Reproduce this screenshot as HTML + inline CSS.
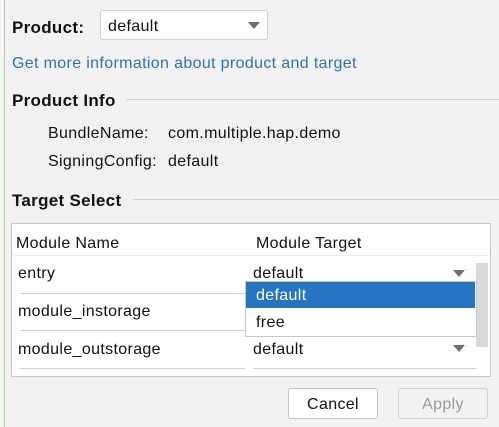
<html><head><style>
body{margin:0;width:499px;height:427px;background:#f2f2f2;position:relative;overflow:hidden;font-family:"Liberation Sans",sans-serif;font-size:16px;letter-spacing:0.35px;color:#111}
.a{position:absolute;white-space:nowrap}
.t{margin-top:2px}
.b{font-weight:bold;font-size:17px;letter-spacing:0.3px}
.line{position:absolute;height:1px;background:#d0d0d0}
.tri{position:absolute;width:0;height:0;border-left:6px solid transparent;border-right:6px solid transparent;border-top:7px solid #6e6e6e}
</style></head><body>
<div class="a" style="left:0;top:0;width:4px;height:427px;background:#eef8ea"></div>
<div class="a" style="left:0;top:0;width:4px;height:58px;background:#f6f6f6"></div>
<div class="a" style="left:4px;top:0;width:1px;height:427px;background:#bdbdbd"></div>
<div class="a b t" style="left:12px;top:16px">Product:</div>
<div class="a" style="left:100px;top:10px;width:166px;height:28px;background:#fff;border:1px solid #d0d0d0;border-radius:3px"></div>
<div class="a t" style="left:108px;top:16px">default</div>
<div class="tri" style="left:248px;top:22px"></div>
<div class="a t" style="left:12px;top:53px;color:#2f70bd">Get more information about product and target</div>
<div class="a b t" style="left:12px;top:89px">Product Info</div>
<div class="line" style="left:126px;top:99px;width:373px"></div>
<div class="a t" style="left:48px;top:123px">BundleName:</div>
<div class="a t" style="left:168px;top:123px">com.multiple.hap.demo</div>
<div class="a t" style="left:48px;top:151px">SigningConfig:</div>
<div class="a t" style="left:168px;top:151px">default</div>
<div class="a b t" style="left:12px;top:189px">Target Select</div>
<div class="line" style="left:133px;top:199px;width:366px"></div>
<div class="a" style="left:11px;top:223px;width:478px;height:152px;background:#fff;border:1px solid #c4c4c4"></div>
<div class="a" style="left:14px;top:226px;width:475px;height:29px;background:#fff;border-bottom:1px solid #ececec"></div>
<div class="a t" style="left:16px;top:233px">Module Name</div>
<div class="a t" style="left:256px;top:233px">Module Target</div>
<div class="a t" style="left:18px;top:263px">entry</div>
<div class="a t" style="left:253px;top:263px">default</div>
<div class="tri" style="left:453px;top:270px"></div>
<div class="line" style="left:20px;top:293px;width:225px"></div>
<div class="a t" style="left:18px;top:301px">module_instorage</div>
<div class="line" style="left:20px;top:330px;width:225px"></div>
<div class="a t" style="left:18px;top:339px">module_outstorage</div>
<div class="a t" style="left:253px;top:339px">default</div>
<div class="tri" style="left:453px;top:345px"></div>
<div class="line" style="left:20px;top:368px;width:225px"></div>
<div class="line" style="left:253px;top:368px;width:223px"></div>
<div class="a" style="left:476px;top:263px;width:12px;height:84px;background:#d9d9d9"></div>
<div class="a" style="left:245px;top:281px;width:230px;height:54px;background:#fff;border:1px solid #c8c8c8"></div>
<div class="a" style="left:246px;top:282px;width:229px;height:26px;background:#2774c0"></div>
<div class="a t" style="left:256px;top:285px;color:#fff">default</div>
<div class="a t" style="left:256px;top:312px">free</div>
<div class="a" style="left:288px;top:388px;width:88px;height:29px;background:#fff;border:1px solid #c4c4c4;border-radius:3px;text-align:center;line-height:31px">Cancel</div>
<div class="a" style="left:398px;top:388px;width:88px;height:29px;background:#f2f2f2;border:1px solid #d0d0d0;border-radius:3px;text-align:center;line-height:31px;color:#999">Apply</div>
</body></html>
